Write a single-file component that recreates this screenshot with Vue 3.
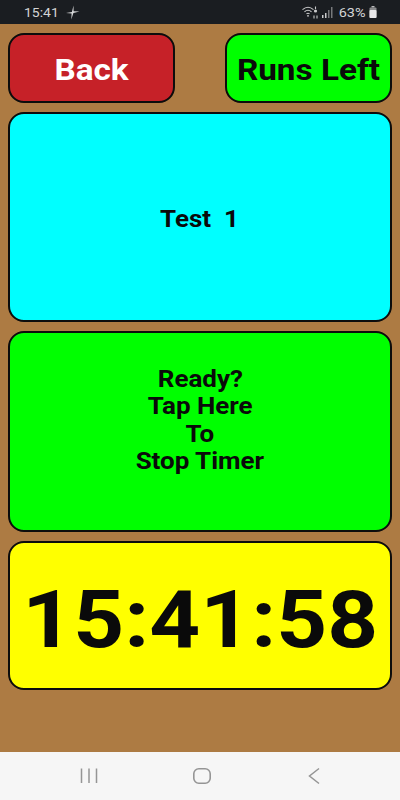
<script setup>
const lines = ['Ready?', 'Tap Here', 'To', 'Stop Timer']
</script>

<template>
  <div class="screen">
    <header class="status">
      <div class="status-left">
        <span class="wide time">15:41</span>
        <svg class="plane" width="15" height="15" viewBox="0 0 15 15">
          <path d="M8.5 .5 L8.6 6.3 L14.5 6.5 L8.4 7.9 L6.3 14.5 L6.6 8.6 L1 8 L6.9 6.9 Z" fill="#d8d9da" />
        </svg>
      </div>
      <div class="status-right">
        <svg class="wifi" width="16" height="13" viewBox="0 0 16 13" fill="none" stroke="#c9cacb" stroke-width="1.1">
          <path d="M0.5 3.6 C4 0.6 8 0.6 11.5 3.6" />
          <path d="M2.5 5.7 C5 3.7 7 3.7 9.5 5.7" />
          <path d="M4.5 7.8 C5.5 7 6.5 7 7.5 7.8" />
          <circle cx="6" cy="9.8" r="0.9" fill="#c9cacb" stroke="none" />
          <path d="M13.5 .5 V3 M12 9.5 V12.5 M15 9.5 V12.5" />
          <circle cx="13.5" cy="5" r="1.6" fill="#c9cacb" stroke="none" />
        </svg>
        <svg class="signal" width="11" height="11" viewBox="0 0 11 11" fill="#c9cacb">
          <rect x="0" y="8" width="1.5" height="3" />
          <rect x="3" y="6" width="1.5" height="5" />
          <rect x="6" y="3" width="1.5" height="8" fill="#77797b" />
          <rect x="9" y="0" width="1.5" height="11" fill="#77797b" />
        </svg>
        <span class="pct wide">63%</span>
        <svg class="battery" width="8" height="12" viewBox="0 0 8 12">
          <rect x="2.5" y="0" width="3" height="1.5" fill="#b9babb" />
          <rect x="0.5" y="1.5" width="7" height="10.5" rx="1" fill="#8a8b8d" />
          <rect x="0.5" y="4" width="7" height="8" rx="1" fill="#e9e9ea" />
        </svg>
      </div>
    </header>

    <main class="content">
      <div class="top-row">
        <button class="btn back"><span class="wide">Back</span></button>
        <button class="btn runs"><span class="wide">Runs Left</span></button>
      </div>
      <section class="panel test"><span class="wide">Test&nbsp;&nbsp;1</span></section>
      <section class="panel stop">
        <span v-for="line in lines" :key="line" class="wide">{{ line }}</span>
      </section>
      <section class="panel clock"><span class="wide">15:41:58</span></section>
    </main>

    <nav class="navbar">
      <svg width="20" height="18" viewBox="0 0 20 18" fill="none" stroke="#959595" stroke-width="1.5">
        <path d="M2.5 1.5 V16 M10 1.5 V16 M17.5 1.5 V16" />
      </svg>
      <svg width="20" height="18" viewBox="0 0 20 18" fill="none" stroke="#959595" stroke-width="1.6">
        <rect x="1.8" y="1.8" width="16.4" height="14.4" rx="5" />
      </svg>
      <svg width="20" height="18" viewBox="0 0 20 18" fill="none" stroke="#959595" stroke-width="1.5">
        <path d="M15 1.5 L5.5 9 L15 16.5" />
      </svg>
    </nav>
  </div>
</template>

<style>
html, body { margin: 0; padding: 0; }
</style>

<style scoped>
.screen {
  width: 400px;
  height: 800px;
  display: flex;
  flex-direction: column;
  background: #ad7b43;
  font-family: Roboto, "Liberation Sans", sans-serif;
  overflow: hidden;
}
.wide {
  display: block;
  transform: scaleX(1.11);
}
.status {
  height: 24px;
  flex: none;
  background: #1a1d21;
  color: #d3d4d5;
  font-size: 12.6px;
  display: flex;
  justify-content: space-between;
  align-items: center;
  padding: 0 23.5px 0 24px;
  box-sizing: border-box;
}
.status-left { display: flex; align-items: center; gap: 10px; }
.time { transform-origin: left center; }
.status-right { display: flex; align-items: center; }
.signal { margin-left: 4px; }
.pct { margin-left: 7px; font-size: 13px; }
.battery { margin-left: 4px; }
.content {
  flex: 1;
  display: flex;
  flex-direction: column;
  padding: 9px 8px 0 8px;
}
.top-row {
  display: flex;
  justify-content: space-between;
  margin-bottom: 9px;
}
.btn {
  width: 167px;
  height: 70px;
  box-sizing: border-box;
  border: 2px solid #0c0c0c;
  border-radius: 16px;
  font-family: inherit;
  font-weight: 700;
  font-size: 30px;
  padding: 2px 0 0;
}
.back { background: #c62128; color: #fff; }
.runs { background: #00ff00; color: #0a0a0a; }
.panel {
  box-sizing: border-box;
  border: 2px solid #0c0c0c;
  border-radius: 16px;
  display: flex;
  flex-direction: column;
  align-items: center;
  justify-content: center;
  color: #0a0a0a;
  font-weight: 700;
}
.test { height: 210px; background: #00ffff; font-size: 23.4px; padding-top: 4px; margin-bottom: 9px; }
.stop { height: 201px; background: #00ff00; font-size: 23.4px; line-height: 27.3px; padding-bottom: 22px; margin-bottom: 9px; }
.clock { height: 149px; background: #ffff00; font-size: 80px; padding-top: 9px; }
.navbar {
  height: 48px;
  flex: none;
  background: #f6f6f6;
  display: grid;
  grid-template-columns: repeat(3, 112.5px);
  justify-items: center;
  align-items: center;
  padding-left: 33px;
  box-sizing: border-box;
}
</style>
